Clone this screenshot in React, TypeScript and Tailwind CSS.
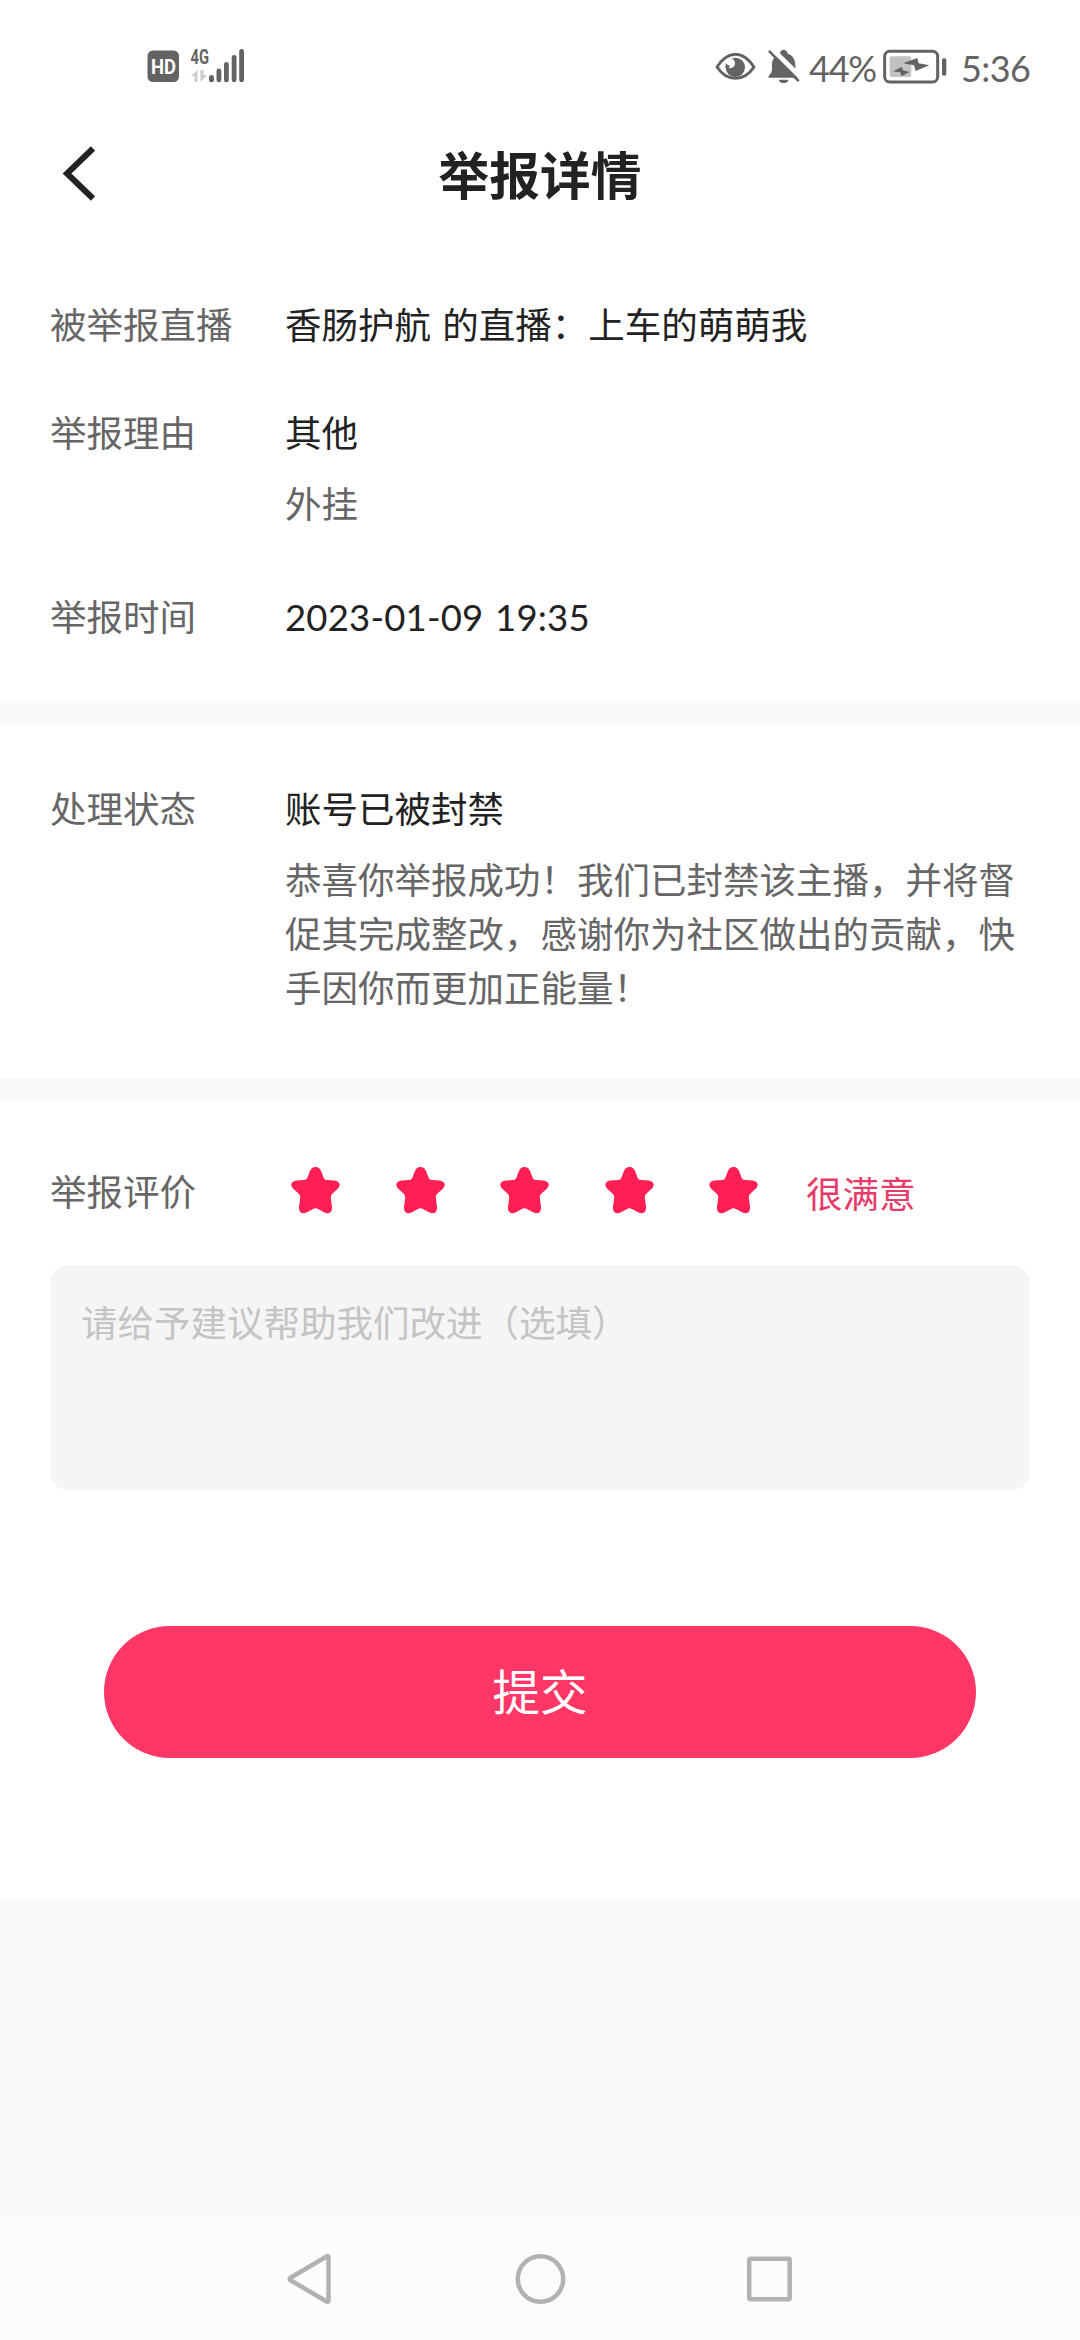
import React from "react";

/* labels and texts of the report */
const REPORT = {
  target: "香肠护航 的直播：上车的萌萌我",
  reason: "其他",
  reasonDetail: "外挂",
  time: "2023-01-09 19:35",
  status: "账号已被封禁",
  statusDetail:
    "恭喜你举报成功！我们已封禁该主播，并将督促其完成整改，感谢你为社区做出的贡献，快手因你而更加正能量！"
};

const SignalIcons = () => (
  <svg width="120" height="40" viewBox="0 0 120 40" fill="#636363">
    <rect x="2.5" y="4.5" width="31.5" height="31.5" rx="5.5" />
    <text
      x="6"
      y="27.5"
      fill="#fff"
      fontFamily="Roboto, sans-serif"
      fontWeight="700"
      fontSize="20"
      textLength="25"
      lengthAdjust="spacingAndGlyphs"
    >
      HD
    </text>
    <text
      x="45.5"
      y="17.5"
      fontFamily="Roboto, sans-serif"
      fontWeight="700"
      fontSize="20"
      textLength="18.5"
      lengthAdjust="spacingAndGlyphs"
    >
      4G
    </text>
    <path
      d="M46 30L52.500 24V36H49.500V30ZM55.500 24H58.500V29H62L55.500 36Z"
      fill="#cbcbcb"
    />
    <rect x="64" y="29" width="5" height="7.3" rx="2.5" />
    <rect x="71.5" y="22.5" width="4.8" height="13.8" rx="2.4" />
    <rect x="79" y="16" width="4.8" height="20.3" rx="2.4" />
    <rect x="86.7" y="9" width="4.8" height="27.3" rx="2.4" />
    <rect x="94.2" y="3" width="4.8" height="33.3" rx="2.4" />
  </svg>
);

const EyeIcon = () => (
  <svg width="41" height="28" viewBox="0 0 123 84">
    <path
      d="M6 42C22 18 40 4 61.500 4S101 18 117 42C101 66 83 76 61.500 76S22 66 6 42Z"
      fill="none"
      stroke="#636363"
      strokeWidth="9"
      strokeLinejoin="round"
    />
    <circle cx="61" cy="43" r="29" fill="#636363" />
    <circle cx="45" cy="31" r="15" fill="#fff" />
    <path d="M32 44C31 38 32 34 34 31C36 36 40 38 46 38L40 46Z" fill="#636363" />
  </svg>
);

const MutedBellIcon = () => (
  <svg width="33" height="35" viewBox="0 0 99 105" fill="#636363">
    <path d="M2 80C10 73 12 68 12 56V48C12 30 20 20 34 14C37 7 41 2 47 2S57 7 60 14C75 20 82 32 82 48V62C84 72 86 76 94 86H2Z" />
    <path d="M32 92H62C60 99 54 102 47 102S34 99 32 92Z" />
    <path d="M10-2L106 92" stroke="#fff" strokeWidth="15" />
    <path d="M5 8L90 94" stroke="#636363" strokeWidth="8" strokeLinecap="round" />
  </svg>
);

const BatteryIcon = () => (
  <svg width="65" height="35" viewBox="0 0 195 105" fill="#636363">
    <rect x="20" y="22" width="65" height="62" rx="7" fill="#c2c2c2" />
    <rect
      x="5"
      y="7"
      width="159"
      height="92"
      rx="15"
      fill="none"
      stroke="#636363"
      strokeWidth="9"
    />
    <rect x="177" y="28" width="13" height="52" rx="5" />
    <path d="M60 43L103 27L107 43L139 49L98 66L93 49Z" />
    <path d="M30 67L56 54L60 64L80 69L55 82L52 70Z" />
  </svg>
);

const StatusBar = () => (
  <div className="flex h-[132px] items-center justify-between pl-[145px] pr-[50px] text-[36px] text-[#636363]">
    <SignalIcons />
    <div className="flex items-center">
      <div className="mt-[2px]">
        <EyeIcon />
      </div>
      <div className="ml-3">
        <MutedBellIcon />
      </div>
      <span className="ml-2 mt-[3px] w-[67px] whitespace-nowrap tracking-[-1.2px]">
        44%
      </span>
      <div className="ml-[7px]">
        <BatteryIcon />
      </div>
      <span className="ml-[13px] mt-[3px] w-[69px] whitespace-nowrap tracking-[-0.6px]">
        5:36
      </span>
    </div>
  </div>
);

const Star = () => (
  <svg width="49" height="46.5" viewBox="0 0 49 46.5" fill="#ff1f55">
    <path d="M24.500 0C27.500 0 29.200 1.800 30.300 4.500L32.300 10C33 12 34 12.800 36 13L43.500 13.600C48.500 14 50.300 18 47 21.500L41.500 26.500C40 28 39.600 29.500 39.900 31.500L41 40C41.500 45.500 37.500 47.500 33.500 45.500L27 42C25.300 41.100 23.700 41.100 22 42L15.500 45.500C11.500 47.500 7.500 45.500 8 40L9.100 31.500C9.400 29.500 9 28 7.500 26.500L2 21.500C-1.300 18 .5 14 5.500 13.600L13 13C15 12.800 16 12 16.700 10L18.700 4.500C19.800 1.800 21.500 0 24.500 0Z" />
  </svg>
);

const Row = ({
  label,
  children
}: {
  label: string;
  children: React.ReactNode;
}) => (
  <div className="flex">
    <div className="w-[235px] shrink-0 text-[#666]">{label}</div>
    <div className="flex-1">{children}</div>
  </div>
);

const NavBar = () => (
  <nav className="flex h-[123px] items-center justify-center bg-[#fcfcfc]">
    <svg
      width="506"
      height="52"
      viewBox="0 0 506 52"
      fill="none"
      stroke="#b2b2b2"
      strokeWidth="4.5"
      strokeLinejoin="round"
    >
      <path d="M41.500 3.500Q40.500 2.800 39.500 3.500L3.200 25Q2 26 3.200 27L39.500 48.500Q40.500 49.200 41.500 48.500Z" />
      <circle cx="253.5" cy="26" r="22.7" />
      <rect x="462.2" y="5.7" width="40.5" height="40.5" rx="1.5" />
    </svg>
  </nav>
);

const App = () => {
  return (
    <div className="flex h-[2340px] w-[1080px] flex-col bg-[#f8f8f8] font-[Lato,'Noto_Sans_CJK_SC',sans-serif] text-[36.5px] leading-[54px] text-[#222]">
      <div className="bg-white">
        <StatusBar />
        <header className="flex h-[88px] items-center px-[62px]">
          <svg
            width="34"
            height="56"
            viewBox="0 0 34 56"
            fill="none"
            stroke="#222"
            strokeWidth="6"
            className="mb-1"
          >
            <path d="M31 2.500L5 27.500L31 52.500" />
          </svg>
          <h1 className="flex-1 pr-[34px] text-center text-[50.7px] font-bold">
            举报详情
          </h1>
        </header>
      </div>

      {/* report info */}
      <section className="h-[483px] bg-white px-[50px] pt-[78px]">
        <Row label="被举报直播">
          <span className="[word-spacing:2px]">{REPORT.target}</span>
        </Row>
        <div className="mt-[54px]">
          <Row label="举报理由">
            <p>{REPORT.reason}</p>
            <p className="mt-[17px] text-[#666]">{REPORT.reasonDetail}</p>
          </Row>
        </div>
        <div className="mt-[59px]">
          <Row label="举报时间">
            <span className="tracking-[0.2px] [word-spacing:2px]">
              {REPORT.time}
            </span>
          </Row>
        </div>
      </section>

      {/* handling result */}
      <section className="mt-[21px] h-[354px] bg-white px-[50px] pt-[58px]">
        <Row label="处理状态">
          <p>{REPORT.status}</p>
          <p className="mt-[17px] w-[734px] text-[#666]">
            {REPORT.statusDetail}
          </p>
        </Row>
      </section>

      {/* rating */}
      <section className="mt-[21px] h-[801px] bg-white px-[50px] pt-[66px]">
        <Row label="举报评价">
          <div className="flex h-[54px] items-center pl-[6px]">
            <div className="mb-[3px] flex gap-[55.5px]">
              {[1, 2, 3, 4, 5].map((item) => (
                <Star key={item} />
              ))}
            </div>
            <span className="ml-12 mt-[3px] text-[#e63b68]">很满意</span>
          </div>
        </Row>
        <textarea
          className="mt-[46px] block h-[225px] w-full resize-none rounded-[18px] bg-[#f5f5f5] px-[31px] py-[31px] placeholder:text-[#c4c4c4]"
          placeholder="请给予建议帮助我们改进（选填）"
        />
        <button className="mx-auto mt-[136px] block h-[132px] w-[872px] rounded-full bg-[#ff3766] text-[47.5px] text-white">
          提交
        </button>
      </section>

      <div className="flex-1" />
      <NavBar />
    </div>
  );
};

export default App;
